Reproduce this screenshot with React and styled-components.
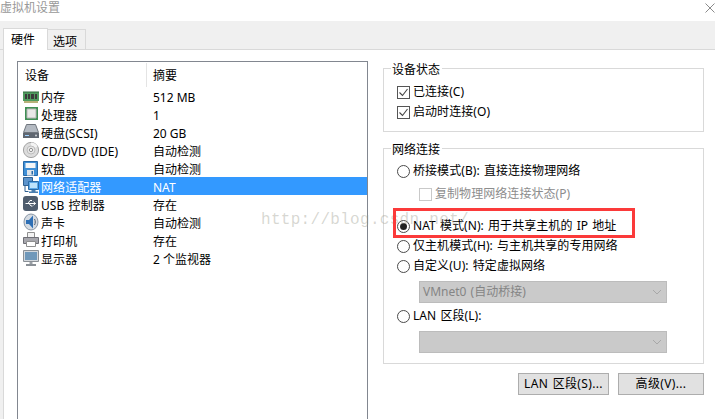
import React from "react";
import styled, { createGlobalStyle } from "styled-components";

const Global = createGlobalStyle`
  html, body { margin: 0; padding: 0; background: #fff; }
  body { font: 12px/18px "Noto Sans", "Noto Sans CJK SC", sans-serif; color: #000; }
  * { box-sizing: border-box; }
`;
const Window = styled.div`position: relative; width: 715px; height: 419px; overflow: hidden; background: #fff;`;
const Title = styled.div`
  display: flex; justify-content: space-between; height: 21px; font-size: 12px; line-height: 15px; color: #999;
  svg { margin-top: 3px; flex: none; }
`;
const Dialog = styled.div`background: #f0f0f0;`;
const TabBar = styled.div`display: flex; align-items: flex-end; height: 29px; padding-left: 3px; border-bottom: 1px solid #d9d9d9;`;
const Tab = styled.div`
  height: ${p => (p.$active ? 22 : 20)}px; width: ${p => (p.$active ? 45 : 39)}px;
  padding-left: ${p => (p.$active ? 7 : 5)}px; line-height: ${p => (p.$active ? 21 : 24)}px;
  border: 1px solid #d9d9d9; border-bottom: 0; background: ${p => (p.$active ? "#fff" : "#f0f0f0")};
  margin-bottom: ${p => (p.$active ? -1 : 0)}px; margin-right: ${p => (p.$active ? -1 : 0)}px;
  position: relative; z-index: ${p => (p.$active ? 1 : 0)};
`;
const Panel = styled.div`
  display: flex; height: 369px; margin-left: 3px; padding: 11px 0 0 13px; gap: 15px;
  background: #fff; border-left: 1px solid #d9d9d9;
`;
const List = styled.div`width: 351px; height: 358px; border: 1px solid #828790; border-bottom: 0; background: #fff; flex: none;`;
const Head = styled.div`display: flex; height: 25px; align-items: flex-start; padding-top: 1px;`;
const HeadCell = styled.div`
  width: ${p => p.$w}px; padding-left: ${p => p.$pad}px; height: 24px; line-height: 26px;
  border-right: ${p => (p.$sep ? "1px solid #e4e4e4" : "0")};
`;
const Row = styled.div`display: flex; height: 18px; align-items: center;`;
const IconCell = styled.div`
  width: 21px; height: 18px; flex: none; padding-left: 4px; display: flex; align-items: center; position: relative; z-index: 1;
  svg { flex: none; }
`;
const RowBody = styled.div`
  display: flex; flex: 1; height: 18px; padding-left: 2px; line-height: 22px;
  background: ${p => (p.$sel ? "#3399ff" : "transparent")}; color: ${p => (p.$sel ? "#fff" : "#000")};
`;
const Name = styled.div`width: 112px; white-space: nowrap; word-spacing: 1px; letter-spacing: .08px;`;
const Right = styled.div`width: 321px; flex: none; display: flex; flex-direction: column; padding-top: 7px;`;
const Group = styled.div`
  position: relative; margin: 0 0 16px; width: 321px; height: ${p => p.$h}px; border: 1px solid #d9d9d9;
`;
const Legend = styled.div`
  position: absolute; left: 7px; top: -7px; padding: 0 2px 0 1px; background: #fff; line-height: 16px;
`;
const Options = styled.div`display: flex; flex-direction: column; padding: ${p => p.$top}px 0 0 13px;`;
const Option = styled.div`
  display: flex; align-items: center; gap: 3px; height: ${p => p.$h || 20}px;
  margin-left: ${p => (p.$indent ? 22 : 0)}px; margin-bottom: ${p => p.$mb || 0}px;
  color: ${p => (p.$off ? "#8d8d8d" : "#000")}; white-space: pre; word-spacing: 1px; letter-spacing: .06px;
`;
const Box = styled.span`
  width: 13px; height: 13px; flex: none; border: 1px solid ${p => (p.$off ? "#c9c9c9" : "#555")};
  display: inline-flex; align-items: center; justify-content: center; background: #fff;
`;
const Radio = styled.span`
  width: 13px; height: 13px; flex: none; border-radius: 50%; border: 1px solid #4a4a4a; background: #fff;
  display: inline-flex; align-items: center; justify-content: center;
`;
const Dot = styled.span`width: 7px; height: 7px; border-radius: 50%; background: radial-gradient(circle at 60% 60%, #222 55%, #666);`;
const Select = styled.div`
  display: flex; align-items: center; justify-content: space-between; width: 248px; height: 22px;
  margin: 5px 0 ${p => p.$mb || 0}px 22px; padding: 0 4px 0 3px; background: #cacaca; border: 1px solid #bcbcbc; color: #858585; word-spacing: 1px;
`;
const ButtonRow = styled.div`display: flex; justify-content: flex-end; gap: 9px; margin-top: -7px;`;
const Button = styled.div`
  width: ${p => p.$w}px; height: 22px; line-height: 20px; text-align: center; background: #e1e1e1; border: 1px solid #adadad;
  word-spacing: 1px; letter-spacing: .35px;
`;
const Highlight = styled.div`
  position: absolute; left: 393px; top: 208px; width: 242px; height: 30px; border: 3px solid #fb3a3a; pointer-events: none;
`;
const Watermark = styled.div`
  position: absolute; left: 261px; top: 210px; font: 16px/20px "Liberation Mono", monospace; letter-spacing: .3px;
  color: rgba(150,150,135,.38); pointer-events: none; white-space: nowrap;
`;

const Close = () => (
  <svg width="10" height="10" viewBox="0 0 10 10"><path d="M.5.5l9 9M9.500.5l-9 9" fill="none" stroke="#8a8a8a" /></svg>
);
const Chevron = () => (
  <svg width="10" height="6" viewBox="0 0 10 6"><path d="M1 1l4 4 4-4" fill="none" stroke="#a8a8a8" /></svg>
);
const Tick = () => (
  <svg width="11" height="11" viewBox="0 0 11 11"><path d="M1.5 5.5l3 3 5-6.5" fill="none" stroke="#444" strokeWidth="1.1" /></svg>
);

const S = ({ children }) => <svg width="18" height="18" viewBox="0 0 18 18">{children}</svg>;
const icons = {
  mem: (
    <S>
      <path d="M1 5h16v9H1z" fill="#4f9a5e" />
      <path d="M2 14h14v2H2z" fill="#b7b27a" />
      <path d="M3 7h2v5H3zM6 7h2v5H6zM9 7h3v5H9zM13 7h2v5h-2z" fill="#3b3b3b" />
      <path d="M1 5h16" stroke="#2f6a3a" />
    </S>
  ),
  cpu: (
    <S>
      <path d="M3 2h13v13H3z" fill="#3f8f55" />
      <path d="M5 4h9v9H5z" fill="#e8e8e8" stroke="#b5b5b5" />
    </S>
  ),
  disk: (
    <S>
      <path d="M4.5 1.5h9l3 8h-15z" fill="#b4bac2" stroke="#6f757d" />
      <path d="M1 10h16v5H1z" fill="#5f6670" />
      <path d="M3 12h4v1H3z" fill="#9fd0ff" />
      <circle cx="14" cy="12.5" r="1" fill="#cfd3d8" />
    </S>
  ),
  cd: (
    <S>
      <circle cx="9" cy="9" r="7.6" fill="#dcdcdc" stroke="#a3a3a3" />
      <path d="M9 1.5a7.5 7.5 0 0 1 6.5 4L9 9z" fill="#f4f4f4" />
      <circle cx="9" cy="9" r="4" fill="#e6e6e6" stroke="#bdbdbd" />
      <circle cx="9" cy="9" r="1.6" fill="#fff" stroke="#8f8f8f" />
    </S>
  ),
  floppy: (
    <S>
      <path d="M1.5 2.5h14v14h-14z" fill="#3f8fd6" stroke="#2769a8" />
      <path d="M3.5 4h10v5h-10z" fill="#f4f6f8" />
      <path d="M5 11h7v5.5H5z" fill="#dfe4e9" />
      <path d="M9.5 12h1.5v3.5H9.5z" fill="#2769a8" />
    </S>
  ),
  net: (
    <S>
      <path d="M1.5 .5h9v8h-9z" fill="#5b93cc" stroke="#2f5f90" />
      <path d="M6.500 4.500h10v8h-10z" fill="#5fa9e6" stroke="#2b6aa6" />
      <path d="M8 6h7v5H8z" fill="#bfe3fb" />
      <path d="M9.500 13h4v1.500h-4zM7 14.500h9V16H7z" fill="#4a7fb0" />
      <path d="M3 9v5.500h3.500" fill="none" stroke="#2f5f90" />
    </S>
  ),
  usb: (
    <S>
      <rect x="1" y="1" width="15" height="15" rx="3" fill="#4f5d6e" />
      <path d="M3.500 8.500h10M11.500 6.800l2 1.700-2 1.700M6 8.500l2-3h2M7 8.500l2 2.500h1.500" fill="none" stroke="#fff" />
    </S>
  ),
  sound: (
    <S>
      <ellipse cx="9" cy="9" rx="7" ry="8" fill="#d5dbe2" stroke="#8a97a6" />
      <path d="M4 7h3l4-4.500v13L7 11H4z" fill="#2e6fb5" />
      <path d="M12.500 6c1 1.600 1 4.400 0 6" fill="none" stroke="#4f5d6e" />
    </S>
  ),
  printer: (
    <S>
      <path d="M5.500 1.500h7v5h-7z" fill="#f3f3f3" stroke="#8f8f8f" />
      <path d="M1.500 6.500h15v6h-15z" fill="#a7a7ad" stroke="#6f6f76" />
      <path d="M4.500 10.500h9v5h-9z" fill="#fff" stroke="#8f8f8f" />
    </S>
  ),
  monitor: (
    <S>
      <path d="M1.500 1.500h15v11h-15z" fill="#d3d8dd" stroke="#8a9096" />
      <path d="M3 3h12v8H3z" fill="#6f98ba" />
      <path d="M7.500 13h3v2h-3z" fill="#9aa0a6" />
      <path d="M4 15h10v2H4z" fill="#8a9096" />
    </S>
  ),
};

const rows = [
  ["mem", "内存", "512 MB"],
  ["cpu", "处理器", "1"],
  ["disk", "硬盘(SCSI)", "20 GB"],
  ["cd", "CD/DVD (IDE)", "自动检测"],
  ["floppy", "软盘", "自动检测"],
  ["net", "网络适配器", "NAT", true],
  ["usb", "USB 控制器", "存在"],
  ["sound", "声卡", "自动检测"],
  ["printer", "打印机", "存在"],
  ["monitor", "显示器", "2 个监视器"],
];

export default function App() {
  return (
    <Window>
      <Global />
      <Title>虚拟机设置<Close /></Title>
      <Dialog>
        <TabBar>
          <Tab $active>硬件</Tab>
          <Tab>选项</Tab>
        </TabBar>
        <Panel>
          <List>
            <Head>
              <HeadCell $w={129} $pad={7} $sep>设备</HeadCell>
              <HeadCell $w={200} $pad={6}>摘要</HeadCell>
            </Head>
            {rows.map(([icon, name, sum, sel]) => (
              <Row key={name}>
                <IconCell>{icons[icon]}</IconCell>
                <RowBody $sel={sel}>
                  <Name>{name}</Name>
                  <div>{sum}</div>
                </RowBody>
              </Row>
            ))}
          </List>
          <Right>
            <Group $h={64}>
              <Legend>设备状态</Legend>
              <Options $top={13}>
                <Option><Box><Tick /></Box>已连接(C)</Option>
                <Option><Box><Tick /></Box>启动时连接(O)</Option>
              </Options>
            </Group>
            <Group $h={216}>
              <Legend>网络连接</Legend>
              <Options $top={12}>
                <Option $mb={3}><Radio />桥接模式(B): 直接连接物理网络</Option>
                <Option $indent $off $mb={12}><Box $off />复制物理网络连接状态(P)</Option>
                <Option><Radio><Dot /></Radio>NAT 模式(N): 用于共享主机的 IP 地址</Option>
                <Option><Radio />仅主机模式(H): 与主机共享的专用网络</Option>
                <Option><Radio />自定义(U): 特定虚拟网络</Option>
                <Select $mb={3}>VMnet0 (自动桥接)<Chevron /></Select>
                <Option><Radio />LAN 区段(L):</Option>
                <Select><span /><Chevron /></Select>
              </Options>
            </Group>
            <ButtonRow>
              <Button $w={91}>LAN 区段(S)...</Button>
              <Button $w={86}>高级(V)...</Button>
            </ButtonRow>
          </Right>
        </Panel>
      </Dialog>
      <Watermark>http://blog.csdn.net/</Watermark>
      <Highlight />
    </Window>
  );
}
